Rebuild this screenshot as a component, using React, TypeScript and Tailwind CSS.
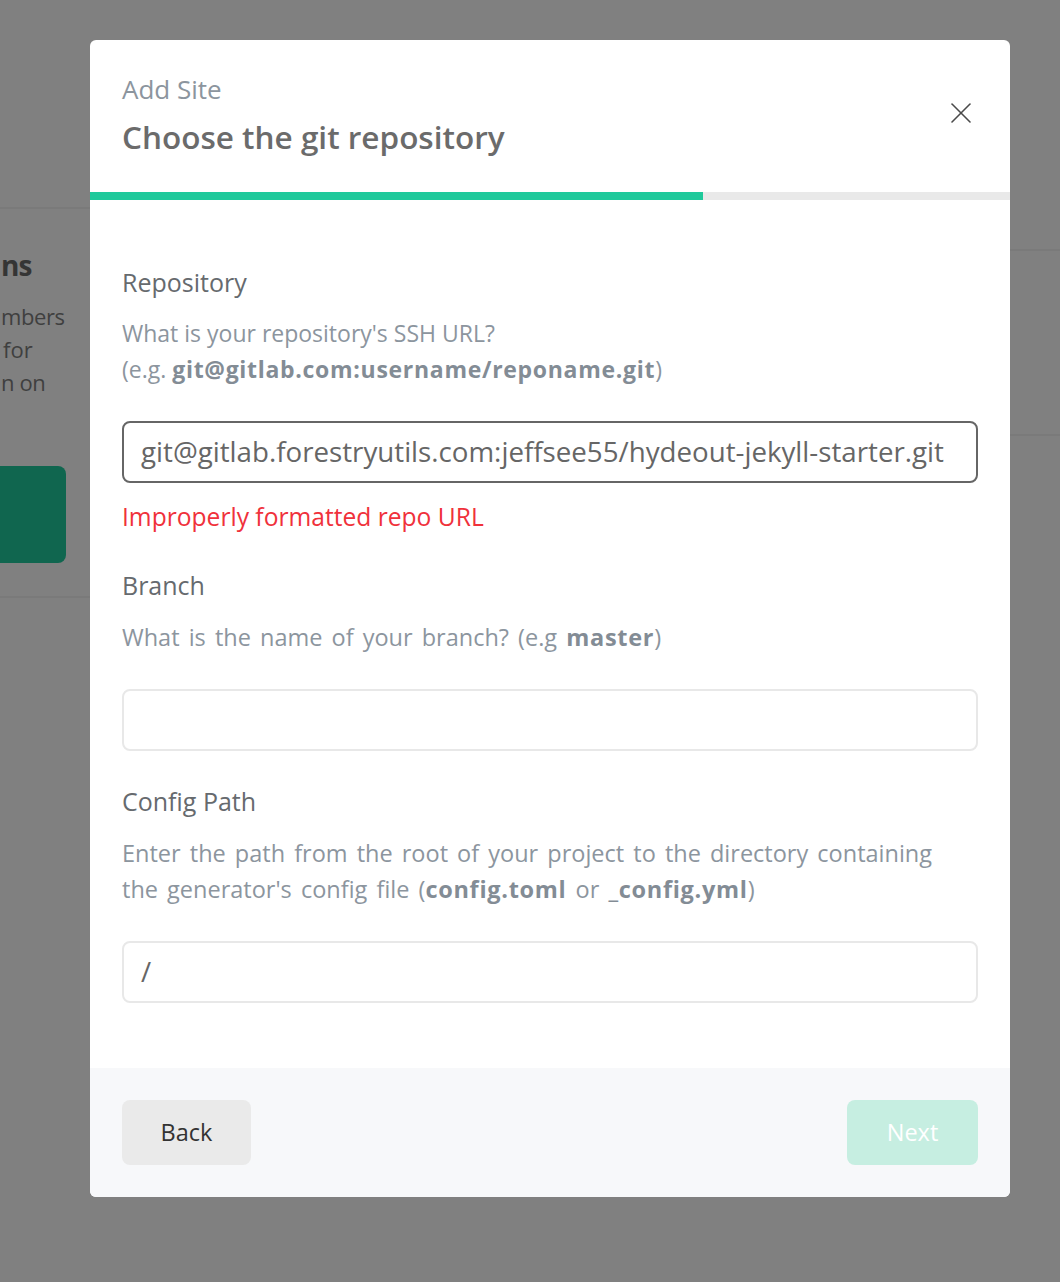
import React from "react";

const font = { fontFamily: "'Open Sans', 'Noto Sans', sans-serif" };

function CloseIcon() {
  return (
    <svg width="22" height="22" viewBox="0 0 22 22" fill="none" stroke="#4a4a4a" strokeWidth="1.6" strokeLinecap="round">
      <path d="M2 2L20 20" />
      <path d="M20 2L2 20" />
    </svg>
  );
}

function Strong({ children }: { children: React.ReactNode }) {
  return <span className="font-bold tracking-[0.7px] text-[#838c95]">{children}</span>;
}

function Field({
  label,
  children,
  input,
}: {
  label: string;
  children: React.ReactNode;
  input: React.ReactNode;
}) {
  return (
    <div className="flex flex-col">
      <div className="text-[25px] leading-[36px] text-[#666a6e]">{label}</div>
      <div className="mt-[16px] text-[23.5px] leading-[36px] text-[#8c959e] [word-spacing:3px]">{children}</div>
      <div className="mt-[34px] flex h-[62px] items-center rounded-[8px] border-2 border-[#e8e8e8] bg-white px-[17px] text-[27.7px] text-[#666]">
        {input}
      </div>
    </div>
  );
}

export default function App() {
  return (
    <div className="relative h-[1282px] w-[1060px] overflow-hidden bg-[#808080]" style={font}>
      {/* page behind the overlay */}
      <div className="flex w-full justify-between">
        <div className="w-[90px] overflow-hidden">
          <div className="mt-[207px] h-[2px] bg-[#7a7a7a]" />
          <div className="mt-[36px] pl-[1px] text-[28px] font-bold leading-[40px] tracking-[-1px] text-[#353535] whitespace-nowrap">
            ns
          </div>
          <div className="mt-[15px] flex flex-col text-[22px] leading-[33px] text-[#3f3f3f] whitespace-nowrap">
            <div className="pl-[1px] tracking-[-0.4px]">mbers</div>
            <div className="pl-[3px]">for</div>
            <div className="pl-[1px] tracking-[-0.4px]">n on</div>
          </div>
          <div className="mt-[67px] h-[97px] w-[66px] rounded-r-[8px] bg-[#10664f]" />
          <div className="mt-[33px] h-[2px] bg-[#7a7a7a]" />
        </div>
        <div className="w-[50px]">
          <div className="mt-[249px] h-[2px] bg-[#7a7a7a]" />
          <div className="mt-[183px] h-[2px] bg-[#7a7a7a]" />
        </div>
      </div>

      {/* modal */}
      <div className="absolute left-[90px] top-[40px] w-[920px] overflow-hidden rounded-[6px] bg-white">
        <div className="flex h-[152px] items-start justify-between pl-[32px] pr-[38px]">
          <div className="flex flex-col pt-[31px]">
            <div className="text-[26px] leading-[36px] text-[#8c959e]">Add Site</div>
            <div className="mt-[12px] text-[31.5px] font-semibold leading-[36px] text-[#6b6b6b]">
              Choose the git repository
            </div>
          </div>
          <div className="pt-[62px]">
            <CloseIcon />
          </div>
        </div>
        <div className="flex h-[8px] bg-[#e9e9e9]">
          <div className="h-full w-[613px] bg-[#1fc99b]" />
        </div>

        <div className="flex flex-col px-[32px] pt-[64px] pb-[65px]">
          <div className="flex flex-col">
            <div className="text-[25px] leading-[36px] text-[#666a6e]">Repository</div>
            <div className="mt-[15px] text-[23px] leading-[36px] text-[#8c959e]">
              What is your repository's SSH URL?
              <br />
              (e.g. <Strong>git@gitlab.com:username/reponame.git</Strong>)
            </div>
            <div className="mt-[34px] flex h-[62px] items-center rounded-[8px] border-2 border-[#666] bg-white px-[17px] text-[27.7px] text-[#666] whitespace-nowrap">
              git@gitlab.forestryutils.com:jeffsee55/hydeout-jekyll-starter.git
            </div>
            <div className="mt-[16px] text-[24.6px] leading-[36px] text-[#f0313b]">Improperly formatted repo URL</div>
          </div>

          <div className="mt-[32px]">
            <Field label="Branch" input={null}>
              What is the name of your branch? (e.g <Strong>master</Strong>)
            </Field>
          </div>

          <div className="mt-[32px]">
            <Field label="Config Path" input="/">
              Enter the path from the root of your project to the directory containing
              <br />
              the generator's config file (<Strong>config.toml</Strong> or <Strong>_config.yml</Strong>)
            </Field>
          </div>
        </div>

        <div className="flex items-center justify-between bg-[#f7f8fa] px-[32px] py-[32px]">
          <button
            type="button"
            className="flex h-[65px] w-[129px] items-center justify-center rounded-[8px] bg-[#eaeaea] text-[23.5px] text-[#333]"
          >
            Back
          </button>
          <button
            type="button"
            className="flex h-[65px] w-[131px] items-center justify-center rounded-[8px] bg-[#c6eee1] text-[23.5px] text-white"
          >
            Next
          </button>
        </div>
      </div>
    </div>
  );
}
